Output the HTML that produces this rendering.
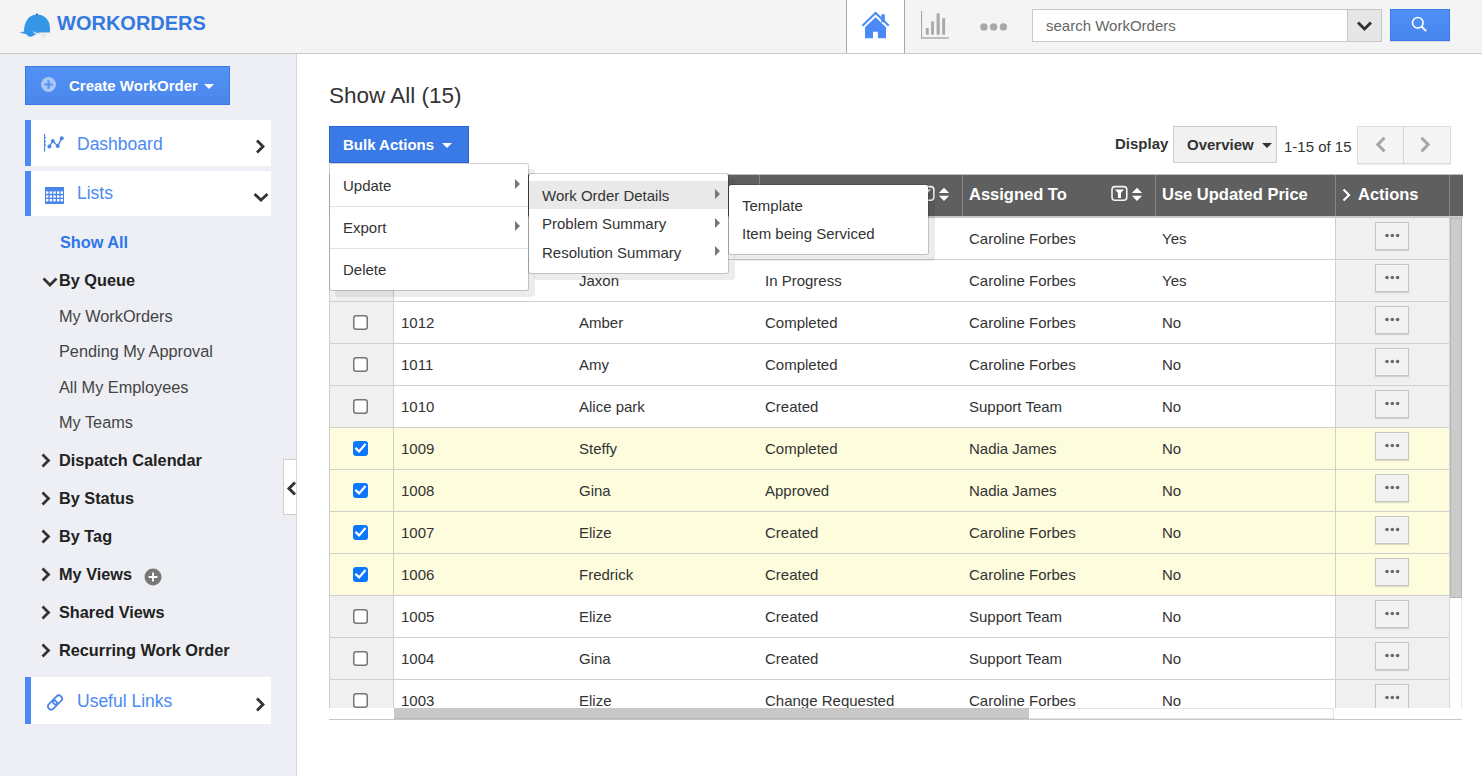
<!DOCTYPE html>
<html><head><meta charset="utf-8">
<style>
*{box-sizing:border-box;margin:0;padding:0}
html,body{width:1482px;height:776px;overflow:hidden;background:#fff;font-family:"Liberation Sans",sans-serif;color:#333}
.abs{position:absolute;line-height:1;white-space:nowrap}
svg{display:block}
#hdr{position:absolute;left:0;top:0;width:1482px;height:54px;background:#f4f4f4;border-bottom:1px solid #c9c9c9}
#side{position:absolute;left:0;top:54px;width:297px;height:722px;background:#edeff4;border-right:1px solid #dcdcdc}
.navbox{position:absolute;left:25px;width:246px;background:#fff;border-left:6px solid #4a8af4}
.navt{position:absolute;left:46px;font-size:17.5px;color:#4a8af2;line-height:1}
.si{position:absolute;left:59px;font-size:16.3px;color:#444;line-height:1;white-space:nowrap}
.sb{position:absolute;left:59px;font-size:16.3px;color:#222;font-weight:bold;line-height:1;white-space:nowrap}
.chev{position:absolute;left:40px}
/* table */
#tbl{position:absolute;left:329px;top:174px;width:1134px;height:546px;overflow:hidden}
#th{position:absolute;left:0;top:0;width:1134px;height:44px;background:#5f5f5f;border-top:1px solid #bdbdbd;border-bottom:2px solid #c9c9c9}
.hc{position:absolute;top:0;height:41px;border-left:1px solid #858585}
.ht{position:absolute;top:11px;font-size:16.5px;font-weight:bold;color:#fff;line-height:1;white-space:nowrap}
#tb{position:absolute;left:0;top:44px;width:1134px;height:490px;overflow:hidden;border-left:1px solid #cfcfcf}
.row{position:absolute;left:0;width:1120px;height:42px;border-bottom:1px solid #cfcfcf}
.ccb{position:absolute;left:0;top:0;width:64px;height:41px;border-right:1px solid #cfcfcf}
.cb{position:absolute;left:23px;top:13px}
.c{position:absolute;top:13px;font-size:15px;color:#333;line-height:1;white-space:nowrap}
.act{position:absolute;left:1005px;top:0;width:115px;height:41px;border-left:1px solid #cfcfcf}
.ab{position:absolute;left:39px;top:4px;width:34px;height:28px;background:#f2f2f2;border:1px solid #c6c6c6;box-shadow:0 1px 1px rgba(0,0,0,.12)}
.ab svg{position:absolute;left:8px;top:10px}
#vs{position:absolute;left:1120px;top:44px;width:13px;height:490px;background:#fff;border-left:1px solid #d8d8d8;border-right:1px solid #e8e8e8}
#vthumb{position:absolute;left:0;top:0;width:12px;height:380px;background:#cbcbcb;border:1px solid #b4b4b4}
#hs{position:absolute;left:65px;top:534px;width:940px;height:11px;background:#fff;border:1px solid #e4e4e4;border-left:none}
#hthumb{position:absolute;left:0;top:-1px;width:635px;height:11px;background:#c8c8c8;border-bottom:1px solid #b8b8b8}
/* menus */
.menu{position:absolute;background:#fff;background-clip:padding-box;border:1px solid rgba(0,0,0,.18);border-radius:3px;box-shadow:6px 6px 0 rgba(0,0,0,.075)}
.mi{position:absolute;font-size:15px;color:#333;line-height:1;white-space:nowrap}
.sep{position:absolute;left:0;right:0;height:1px;background:#e2e2e2}
.tri{position:absolute;width:0;height:0;border-top:5.5px solid transparent;border-bottom:5.5px solid transparent;border-left:5.6px solid #777}
</style></head><body>
<!-- HEADER -->
<div id="hdr">
  <svg class="abs" style="left:19px;top:13px" width="33" height="26" viewBox="0 0 33 26">
    <path d="M5 18.5 C5 8 10.5 1.5 18 1.5 C25.5 1.5 31 7 31 15 L31 19.5 L21.5 19.5 C18.5 19.5 16.5 21.5 14.5 22.8 C12.5 24 10 24 8.5 22.8 L7.5 21.2 L0.8 19.8 C2 19.2 3.5 18.7 5 18.5 Z" fill="#3596e8"/>
    <circle cx="18" cy="1.4" r="1.1" fill="#2a78c0"/>
    <path d="M14.5 18.6 L16.5 20.2 L22.5 21.6" stroke="#dfe6ec" stroke-width="1.2" fill="none"/>
    <circle cx="24.6" cy="22.3" r="1.5" fill="none" stroke="#d5dbe0" stroke-width="0.9"/>
  </svg>
  <div class="abs" style="left:57px;top:13px;font-size:20px;font-weight:bold;color:#3479e0;">WORKORDERS</div>
  <!-- home tab -->
  <div class="abs" style="left:846px;top:0;width:59px;height:53px;background:#fff;border-left:1px solid #a8a8a8;border-right:1px solid #a8a8a8"></div>
  <svg class="abs" style="left:855px;top:5px" width="40" height="40" viewBox="0 0 40 40">
    <path d="M7.5 20.8 L20.6 8 L33.8 20.8" stroke="#4a8af4" stroke-width="2" fill="none"/>
    <rect x="26.3" y="9.3" width="3.5" height="8" fill="#4a8af4"/>
    <path d="M10 22.3 L20.6 12.2 L31 22.3 L31 33.2 L22.9 33.2 L22.9 26.8 L18 26.8 L18 33.2 L10 33.2 Z" fill="#4a8af4"/>
  </svg>
  <svg class="abs" style="left:912px;top:5px" width="100" height="40" viewBox="0 0 100 40">
    <g fill="#a8a8a8">
    <rect x="9" y="5.9" width="1.1" height="27.8"/><rect x="9" y="32.3" width="28" height="1.4"/>
    <rect x="13.8" y="22.9" width="2.9" height="6.8"/><rect x="19.1" y="16.5" width="2.8" height="13.2"/><rect x="24.6" y="8.4" width="3.1" height="21.3"/><rect x="30.2" y="13.2" width="2.9" height="16.5"/>
    <circle cx="71.9" cy="21.9" r="3.7"/><circle cx="81.6" cy="21.9" r="3.7"/><circle cx="91.4" cy="21.9" r="3.7"/>
    </g>
  </svg>
  
  <!-- search -->
  <div class="abs" style="left:1032px;top:9px;width:350px;height:33px;background:#fff;border:1px solid #c8c8c8"></div>
  <div class="abs" style="left:1046px;top:18px;font-size:15px;color:#666">search WorkOrders</div>
  <div class="abs" style="left:1347px;top:9px;width:35px;height:33px;background:#e6e6e6;border:1px solid #c6c6c6"></div>
  <svg class="abs" style="left:1356px;top:20px" width="17" height="12" viewBox="0 0 17 12">
    <path d="M2 2.5 L8.5 9 L15 2.5" stroke="#333" stroke-width="3" fill="none"/>
  </svg>
  <div class="abs" style="left:1390px;top:9px;width:60px;height:32px;background:linear-gradient(#4f8ff6,#4886ee);border:1px solid #3a7cf0;box-shadow:0 1px 1px rgba(0,0,0,.1)"></div>
  <svg class="abs" style="left:1411px;top:16px" width="17" height="17" viewBox="0 0 17 17">
    <circle cx="6.8" cy="6.8" r="5.3" stroke="#fff" stroke-width="1.6" fill="none"/>
    <path d="M10.6 10.6 L15.2 15.2" stroke="#fff" stroke-width="1.9"/>
  </svg>
</div>

<!-- SIDEBAR -->
<div id="side">
  <div class="abs" style="left:25px;top:12px;width:205px;height:39px;background:linear-gradient(#5391f6,#4a86ea);border:1px solid #3a78e6"></div>
  <svg class="abs" style="left:40px;top:22px" width="17" height="17" viewBox="0 0 17 17">
    <circle cx="8.5" cy="8.5" r="7.5" fill="#a9c6f7"/>
    <path d="M8.5 4.2 L8.5 12.8 M4.2 8.5 L12.8 8.5" stroke="#5a93f2" stroke-width="2.2"/>
  </svg>
  <div class="abs" style="left:69px;top:24px;font-size:15px;font-weight:bold;color:#fff">Create WorkOrder</div>
  <div class="abs" style="left:204px;top:30px;width:0;height:0;border-left:5px solid transparent;border-right:5px solid transparent;border-top:5px solid #fff"></div>

  <div class="navbox" style="top:66px;height:46px">
    <svg class="abs" style="left:12px;top:13px" width="22" height="20" viewBox="0 0 22 20">
      <rect x="1" y="0.8" width="1.1" height="18" fill="#4a86e8"/>
      <circle cx="2.4" cy="4.6" r="0.7" fill="#4a86e8"/><circle cx="2.4" cy="8.4" r="0.7" fill="#4a86e8"/><circle cx="2.4" cy="12" r="0.7" fill="#4a86e8"/>
      <path d="M6.4 13.4 L9.8 8 L14.7 12.9 L18.7 5.3" stroke="#4a86e8" stroke-width="1.4" fill="none"/>
      <circle cx="6.4" cy="13.4" r="2" fill="#4a86e8"/><circle cx="9.8" cy="8" r="2" fill="#4a86e8"/><circle cx="14.7" cy="12.9" r="2" fill="#4a86e8"/><circle cx="18.7" cy="5.3" r="2" fill="#4a86e8"/>
    </svg>
    <div class="navt" style="top:16px">Dashboard</div>
    <svg class="abs" style="left:223px;top:19px" width="12" height="15" viewBox="0 0 12 15">
      <path d="M3 1.5 L9 7.5 L3 13.5" stroke="#333" stroke-width="2.8" fill="none"/>
    </svg>
  </div>
  <div class="navbox" style="top:117px;height:45px">
    <svg class="abs" style="left:14px;top:16px" width="19" height="17" viewBox="0 0 19 17">
      <rect x="0" y="0" width="19" height="17" fill="#4a86e8"/>
      <g fill="#fff"><rect x="1" y="4.4" width="2.4" height="2.4"/><rect x="4.7" y="4.4" width="2.4" height="2.4"/><rect x="8.3" y="4.4" width="2.4" height="2.4"/><rect x="12" y="4.4" width="2.4" height="2.4"/><rect x="15.6" y="4.4" width="2.4" height="2.4"/><rect x="1" y="8.3" width="2.4" height="2.4"/><rect x="4.7" y="8.3" width="2.4" height="2.4"/><rect x="8.3" y="8.3" width="2.4" height="2.4"/><rect x="12" y="8.3" width="2.4" height="2.4"/><rect x="15.6" y="8.3" width="2.4" height="2.4"/><rect x="1" y="12" width="2.4" height="2.4"/><rect x="4.7" y="12" width="2.4" height="2.4"/><rect x="8.3" y="12" width="2.4" height="2.4"/><rect x="12" y="12" width="2.4" height="2.4"/><rect x="15.6" y="12" width="2.4" height="2.4"/></g>
    </svg>
    <div class="navt" style="top:14px">Lists</div>
    <svg class="abs" style="left:222px;top:19.5px" width="16" height="12" viewBox="0 0 16 12">
      <path d="M1.5 3 L8 9 L14.5 3" stroke="#333" stroke-width="2.8" fill="none"/>
    </svg>
  </div>

  <div class="sb" style="left:60px;top:180px;color:#2f76ec">Show All</div>
  <svg class="abs" style="left:42px;top:221.5px" width="16" height="12" viewBox="0 0 16 12">
    <path d="M1.5 2.5 L8 9 L14.5 2.5" stroke="#333" stroke-width="2.8" fill="none"/>
  </svg>
  <div class="sb" style="top:218px">By Queue</div>
  <div class="si" style="top:254px">My WorkOrders</div>
  <div class="si" style="top:289px">Pending My Approval</div>
  <div class="si" style="top:325px">All My Employees</div>
  <div class="si" style="top:360px">My Teams</div>

  <svg class="chev" style="top:399px" width="12" height="15" viewBox="0 0 12 15"><path d="M2.5 1.5 L8.5 7.5 L2.5 13.5" stroke="#333" stroke-width="2.8" fill="none"/></svg>
  <div class="sb" style="top:398px">Dispatch Calendar</div>
  <svg class="chev" style="top:437px" width="12" height="15" viewBox="0 0 12 15"><path d="M2.5 1.5 L8.5 7.5 L2.5 13.5" stroke="#333" stroke-width="2.8" fill="none"/></svg>
  <div class="sb" style="top:436px">By Status</div>
  <svg class="chev" style="top:475px" width="12" height="15" viewBox="0 0 12 15"><path d="M2.5 1.5 L8.5 7.5 L2.5 13.5" stroke="#333" stroke-width="2.8" fill="none"/></svg>
  <div class="sb" style="top:474px">By Tag</div>
  <svg class="chev" style="top:513px" width="12" height="15" viewBox="0 0 12 15"><path d="M2.5 1.5 L8.5 7.5 L2.5 13.5" stroke="#333" stroke-width="2.8" fill="none"/></svg>
  <div class="sb" style="top:512px">My Views</div>
  <svg class="abs" style="left:144px;top:514px" width="18" height="18" viewBox="0 0 18 18">
    <circle cx="9" cy="9" r="8.5" fill="#777"/>
    <path d="M9 4.6 L9 13.4 M4.6 9 L13.4 9" stroke="#fff" stroke-width="1.8"/>
  </svg>
  <svg class="chev" style="top:551px" width="12" height="15" viewBox="0 0 12 15"><path d="M2.5 1.5 L8.5 7.5 L2.5 13.5" stroke="#333" stroke-width="2.8" fill="none"/></svg>
  <div class="sb" style="top:550px">Shared Views</div>
  <svg class="chev" style="top:589px" width="12" height="15" viewBox="0 0 12 15"><path d="M2.5 1.5 L8.5 7.5 L2.5 13.5" stroke="#333" stroke-width="2.8" fill="none"/></svg>
  <div class="sb" style="top:588px">Recurring Work Order</div>

  <div class="navbox" style="top:623px;height:47px">
    <svg class="abs" style="left:15px;top:17px" width="18" height="17" viewBox="0 0 18 17">
      <g transform="translate(9 8.5) rotate(-45)" fill="none" stroke="#4a86e8" stroke-width="1.8">
        <rect x="-8.6" y="-3.2" width="10.2" height="6.4" rx="3.2"/>
        <rect x="-1.6" y="-3.2" width="10.2" height="6.4" rx="3.2"/>
      </g>
    </svg>
    <div class="navt" style="top:16px">Useful Links</div>
    <svg class="abs" style="left:223px;top:20px" width="12" height="15" viewBox="0 0 12 15">
      <path d="M3 1.5 L9 7.5 L3 13.5" stroke="#333" stroke-width="2.8" fill="none"/>
    </svg>
  </div>
</div>
<!-- collapse tab -->
<div class="abs" style="left:283px;top:459px;width:13px;height:56px;background:#fff;border:1px solid #cfcfcf;border-right:none"></div>
<svg class="abs" style="left:285px;top:479px" width="13" height="20" viewBox="0 0 13 20"><path d="M10 3.5 L4 9.5 L10 15.5" stroke="#333" stroke-width="3" fill="none"/></svg>
<div class="abs" style="left:296px;top:54px;width:1px;height:722px;background:#d6d6d6"></div>
<!-- CONTENT -->
<div class="abs" style="left:329px;top:84.5px;font-size:22.5px;color:#333">Show All (15)</div>

<div class="abs" style="left:1115px;top:136px;font-size:15px;font-weight:bold;color:#333">Display</div>
<div class="abs" style="left:1173px;top:126px;width:104px;height:37px;background:#f1f1f1;border:1px solid #cdcdcd"></div>
<div class="abs" style="left:1187px;top:137px;font-size:15px;font-weight:bold;color:#333">Overview</div>
<div class="abs" style="left:1262px;top:143px;width:0;height:0;border-left:5px solid transparent;border-right:5px solid transparent;border-top:5px solid #333"></div>
<div class="abs" style="left:1284px;top:139px;font-size:15px;color:#333">1-15 of 15</div>
<div class="abs" style="left:1357px;top:126px;width:94px;height:38px;background:#f5f5f5;border:1px solid #dcdcdc;box-shadow:0 1px 1px rgba(0,0,0,.06)"></div>
<div class="abs" style="left:1403px;top:126px;width:1px;height:38px;background:#d6d6d6"></div>
<svg class="abs" style="left:1374px;top:136px" width="13" height="18" viewBox="0 0 13 18"><path d="M10.5 1.8 L3.8 8.6 L10.5 15.4" stroke="#a6a6a6" stroke-width="3" fill="none"/></svg>
<svg class="abs" style="left:1419px;top:136px" width="13" height="18" viewBox="0 0 13 18"><path d="M2.5 1.8 L9.2 8.6 L2.5 15.4" stroke="#a6a6a6" stroke-width="3" fill="none"/></svg>

<!-- TABLE -->
<div id="tbl">
  <div id="th">
    <div class="abs" style="left:0;top:-1px;width:1px;height:44px;background:#c4c4c4"></div>
    <div class="hc" style="left:64px;border-left:1px solid #858585"></div>
    <div class="hc" style="left:243px"></div>
    <div class="hc" style="left:430px"></div>
    <div class="hc" style="left:633px"></div>
    <div class="hc" style="left:826px"></div>
    <div class="hc" style="left:1006px"></div>
    <div class="hc" style="left:1120px"></div>
    <div class="ht" style="left:71px">ID</div>
    <div class="ht" style="left:249px">Name</div>
    <div class="ht" style="left:436px">Status</div>
    <svg class="abs" style="left:588px;top:9px" width="34" height="20" viewBox="0 0 34 20"><rect x="2" y="2.6" width="14.8" height="13.7" rx="3" stroke="#f4f4f4" stroke-width="1.6" fill="none"/><path d="M4.7 5.5 L13.9 5.5 L11 8.8 L11 14 L7.9 14 L7.9 8.8 Z" fill="#fff"/><path d="M21.9 9.1 L27 3.7 L32.1 9.1 Z M21.9 11.7 L32.1 11.7 L27 17.1 Z" fill="#fff"/></svg>
    <div class="ht" style="left:640px">Assigned To</div>
    <svg class="abs" style="left:781px;top:9px" width="34" height="20" viewBox="0 0 34 20"><rect x="2" y="2.6" width="14.8" height="13.7" rx="3" stroke="#f4f4f4" stroke-width="1.6" fill="none"/><path d="M4.7 5.5 L13.9 5.5 L11 8.8 L11 14 L7.9 14 L7.9 8.8 Z" fill="#fff"/><path d="M21.9 9.1 L27 3.7 L32.1 9.1 Z M21.9 11.7 L32.1 11.7 L27 17.1 Z" fill="#fff"/></svg>
    <div class="ht" style="left:833px">Use Updated Price</div>
    <svg class="abs" style="left:1013px;top:13px" width="9" height="14" viewBox="0 0 9 14"><path d="M1.5 1.5 L7 7 L1.5 12.5" stroke="#fff" stroke-width="2.2" fill="none"/></svg>
    <div class="ht" style="left:1029px">Actions</div>
  </div>
  <div id="tb">
<div class="row" style="top:0px;background:#fff">
<div class="ccb" style="background:#f0f0f0"><span class="cb"><svg width="15" height="15" viewBox="0 0 15 15"><rect x="0.75" y="0.75" width="13.5" height="13.5" rx="2.5" fill="#fff" stroke="#767676" stroke-width="1.5"/></svg></span></div>
<span class="c" style="left:71px">1014</span><span class="c" style="left:249px"></span><span class="c" style="left:435px"></span><span class="c" style="left:639px">Caroline Forbes</span><span class="c" style="left:832px">Yes</span>
<div class="act" style="background:#f0f0f0"><div class="ab"><svg width="16" height="5" viewBox="0 0 16 5"><circle cx="3" cy="2.5" r="1.8" fill="#6a6a6a"/><circle cx="8.3" cy="2.5" r="1.8" fill="#6a6a6a"/><circle cx="13.6" cy="2.5" r="1.8" fill="#6a6a6a"/></svg></div></div>
</div>
<div class="row" style="top:42px;background:#fff">
<div class="ccb" style="background:#f0f0f0"><span class="cb"><svg width="15" height="15" viewBox="0 0 15 15"><rect x="0.75" y="0.75" width="13.5" height="13.5" rx="2.5" fill="#fff" stroke="#767676" stroke-width="1.5"/></svg></span></div>
<span class="c" style="left:71px">1013</span><span class="c" style="left:249px">Jaxon</span><span class="c" style="left:435px">In Progress</span><span class="c" style="left:639px">Caroline Forbes</span><span class="c" style="left:832px">Yes</span>
<div class="act" style="background:#f0f0f0"><div class="ab"><svg width="16" height="5" viewBox="0 0 16 5"><circle cx="3" cy="2.5" r="1.8" fill="#6a6a6a"/><circle cx="8.3" cy="2.5" r="1.8" fill="#6a6a6a"/><circle cx="13.6" cy="2.5" r="1.8" fill="#6a6a6a"/></svg></div></div>
</div>
<div class="row" style="top:84px;background:#fff">
<div class="ccb" style="background:#f0f0f0"><span class="cb"><svg width="15" height="15" viewBox="0 0 15 15"><rect x="0.75" y="0.75" width="13.5" height="13.5" rx="2.5" fill="#fff" stroke="#767676" stroke-width="1.5"/></svg></span></div>
<span class="c" style="left:71px">1012</span><span class="c" style="left:249px">Amber</span><span class="c" style="left:435px">Completed</span><span class="c" style="left:639px">Caroline Forbes</span><span class="c" style="left:832px">No</span>
<div class="act" style="background:#f0f0f0"><div class="ab"><svg width="16" height="5" viewBox="0 0 16 5"><circle cx="3" cy="2.5" r="1.8" fill="#6a6a6a"/><circle cx="8.3" cy="2.5" r="1.8" fill="#6a6a6a"/><circle cx="13.6" cy="2.5" r="1.8" fill="#6a6a6a"/></svg></div></div>
</div>
<div class="row" style="top:126px;background:#fff">
<div class="ccb" style="background:#f0f0f0"><span class="cb"><svg width="15" height="15" viewBox="0 0 15 15"><rect x="0.75" y="0.75" width="13.5" height="13.5" rx="2.5" fill="#fff" stroke="#767676" stroke-width="1.5"/></svg></span></div>
<span class="c" style="left:71px">1011</span><span class="c" style="left:249px">Amy</span><span class="c" style="left:435px">Completed</span><span class="c" style="left:639px">Caroline Forbes</span><span class="c" style="left:832px">No</span>
<div class="act" style="background:#f0f0f0"><div class="ab"><svg width="16" height="5" viewBox="0 0 16 5"><circle cx="3" cy="2.5" r="1.8" fill="#6a6a6a"/><circle cx="8.3" cy="2.5" r="1.8" fill="#6a6a6a"/><circle cx="13.6" cy="2.5" r="1.8" fill="#6a6a6a"/></svg></div></div>
</div>
<div class="row" style="top:168px;background:#fff">
<div class="ccb" style="background:#f0f0f0"><span class="cb"><svg width="15" height="15" viewBox="0 0 15 15"><rect x="0.75" y="0.75" width="13.5" height="13.5" rx="2.5" fill="#fff" stroke="#767676" stroke-width="1.5"/></svg></span></div>
<span class="c" style="left:71px">1010</span><span class="c" style="left:249px">Alice park</span><span class="c" style="left:435px">Created</span><span class="c" style="left:639px">Support Team</span><span class="c" style="left:832px">No</span>
<div class="act" style="background:#f0f0f0"><div class="ab"><svg width="16" height="5" viewBox="0 0 16 5"><circle cx="3" cy="2.5" r="1.8" fill="#6a6a6a"/><circle cx="8.3" cy="2.5" r="1.8" fill="#6a6a6a"/><circle cx="13.6" cy="2.5" r="1.8" fill="#6a6a6a"/></svg></div></div>
</div>
<div class="row" style="top:210px;background:#fdfcdd">
<div class="ccb" style="background:#fdfcdd"><span class="cb"><svg width="15" height="15" viewBox="0 0 15 15"><rect x="0" y="0" width="15" height="15" rx="3" fill="#0b76fe"/><path d="M3.2 7.6 L6.1 10.4 L11.8 3.9" stroke="#fff" stroke-width="2.2" fill="none" stroke-linecap="square"/></svg></span></div>
<span class="c" style="left:71px">1009</span><span class="c" style="left:249px">Steffy</span><span class="c" style="left:435px">Completed</span><span class="c" style="left:639px">Nadia James</span><span class="c" style="left:832px">No</span>
<div class="act" style="background:#fdfcdd"><div class="ab"><svg width="16" height="5" viewBox="0 0 16 5"><circle cx="3" cy="2.5" r="1.8" fill="#6a6a6a"/><circle cx="8.3" cy="2.5" r="1.8" fill="#6a6a6a"/><circle cx="13.6" cy="2.5" r="1.8" fill="#6a6a6a"/></svg></div></div>
</div>
<div class="row" style="top:252px;background:#fdfcdd">
<div class="ccb" style="background:#fdfcdd"><span class="cb"><svg width="15" height="15" viewBox="0 0 15 15"><rect x="0" y="0" width="15" height="15" rx="3" fill="#0b76fe"/><path d="M3.2 7.6 L6.1 10.4 L11.8 3.9" stroke="#fff" stroke-width="2.2" fill="none" stroke-linecap="square"/></svg></span></div>
<span class="c" style="left:71px">1008</span><span class="c" style="left:249px">Gina</span><span class="c" style="left:435px">Approved</span><span class="c" style="left:639px">Nadia James</span><span class="c" style="left:832px">No</span>
<div class="act" style="background:#fdfcdd"><div class="ab"><svg width="16" height="5" viewBox="0 0 16 5"><circle cx="3" cy="2.5" r="1.8" fill="#6a6a6a"/><circle cx="8.3" cy="2.5" r="1.8" fill="#6a6a6a"/><circle cx="13.6" cy="2.5" r="1.8" fill="#6a6a6a"/></svg></div></div>
</div>
<div class="row" style="top:294px;background:#fdfcdd">
<div class="ccb" style="background:#fdfcdd"><span class="cb"><svg width="15" height="15" viewBox="0 0 15 15"><rect x="0" y="0" width="15" height="15" rx="3" fill="#0b76fe"/><path d="M3.2 7.6 L6.1 10.4 L11.8 3.9" stroke="#fff" stroke-width="2.2" fill="none" stroke-linecap="square"/></svg></span></div>
<span class="c" style="left:71px">1007</span><span class="c" style="left:249px">Elize</span><span class="c" style="left:435px">Created</span><span class="c" style="left:639px">Caroline Forbes</span><span class="c" style="left:832px">No</span>
<div class="act" style="background:#fdfcdd"><div class="ab"><svg width="16" height="5" viewBox="0 0 16 5"><circle cx="3" cy="2.5" r="1.8" fill="#6a6a6a"/><circle cx="8.3" cy="2.5" r="1.8" fill="#6a6a6a"/><circle cx="13.6" cy="2.5" r="1.8" fill="#6a6a6a"/></svg></div></div>
</div>
<div class="row" style="top:336px;background:#fdfcdd">
<div class="ccb" style="background:#fdfcdd"><span class="cb"><svg width="15" height="15" viewBox="0 0 15 15"><rect x="0" y="0" width="15" height="15" rx="3" fill="#0b76fe"/><path d="M3.2 7.6 L6.1 10.4 L11.8 3.9" stroke="#fff" stroke-width="2.2" fill="none" stroke-linecap="square"/></svg></span></div>
<span class="c" style="left:71px">1006</span><span class="c" style="left:249px">Fredrick</span><span class="c" style="left:435px">Created</span><span class="c" style="left:639px">Caroline Forbes</span><span class="c" style="left:832px">No</span>
<div class="act" style="background:#fdfcdd"><div class="ab"><svg width="16" height="5" viewBox="0 0 16 5"><circle cx="3" cy="2.5" r="1.8" fill="#6a6a6a"/><circle cx="8.3" cy="2.5" r="1.8" fill="#6a6a6a"/><circle cx="13.6" cy="2.5" r="1.8" fill="#6a6a6a"/></svg></div></div>
</div>
<div class="row" style="top:378px;background:#fff">
<div class="ccb" style="background:#f0f0f0"><span class="cb"><svg width="15" height="15" viewBox="0 0 15 15"><rect x="0.75" y="0.75" width="13.5" height="13.5" rx="2.5" fill="#fff" stroke="#767676" stroke-width="1.5"/></svg></span></div>
<span class="c" style="left:71px">1005</span><span class="c" style="left:249px">Elize</span><span class="c" style="left:435px">Created</span><span class="c" style="left:639px">Support Team</span><span class="c" style="left:832px">No</span>
<div class="act" style="background:#f0f0f0"><div class="ab"><svg width="16" height="5" viewBox="0 0 16 5"><circle cx="3" cy="2.5" r="1.8" fill="#6a6a6a"/><circle cx="8.3" cy="2.5" r="1.8" fill="#6a6a6a"/><circle cx="13.6" cy="2.5" r="1.8" fill="#6a6a6a"/></svg></div></div>
</div>
<div class="row" style="top:420px;background:#fff">
<div class="ccb" style="background:#f0f0f0"><span class="cb"><svg width="15" height="15" viewBox="0 0 15 15"><rect x="0.75" y="0.75" width="13.5" height="13.5" rx="2.5" fill="#fff" stroke="#767676" stroke-width="1.5"/></svg></span></div>
<span class="c" style="left:71px">1004</span><span class="c" style="left:249px">Gina</span><span class="c" style="left:435px">Created</span><span class="c" style="left:639px">Support Team</span><span class="c" style="left:832px">No</span>
<div class="act" style="background:#f0f0f0"><div class="ab"><svg width="16" height="5" viewBox="0 0 16 5"><circle cx="3" cy="2.5" r="1.8" fill="#6a6a6a"/><circle cx="8.3" cy="2.5" r="1.8" fill="#6a6a6a"/><circle cx="13.6" cy="2.5" r="1.8" fill="#6a6a6a"/></svg></div></div>
</div>
<div class="row" style="top:462px;background:#fff">
<div class="ccb" style="background:#f0f0f0"><span class="cb"><svg width="15" height="15" viewBox="0 0 15 15"><rect x="0.75" y="0.75" width="13.5" height="13.5" rx="2.5" fill="#fff" stroke="#767676" stroke-width="1.5"/></svg></span></div>
<span class="c" style="left:71px">1003</span><span class="c" style="left:249px">Elize</span><span class="c" style="left:435px">Change Requested</span><span class="c" style="left:639px">Caroline Forbes</span><span class="c" style="left:832px">No</span>
<div class="act" style="background:#f0f0f0"><div class="ab"><svg width="16" height="5" viewBox="0 0 16 5"><circle cx="3" cy="2.5" r="1.8" fill="#6a6a6a"/><circle cx="8.3" cy="2.5" r="1.8" fill="#6a6a6a"/><circle cx="13.6" cy="2.5" r="1.8" fill="#6a6a6a"/></svg></div></div>
</div>
  </div>
  <div id="vs"><div id="vthumb"></div></div>
  <div id="hs"><div id="hthumb"></div></div>
  <div class="abs" style="left:0;top:545px;width:1133px;height:1px;background:#c8c8c8"></div>
</div>

<!-- BULK ACTIONS -->
<div class="abs" style="left:329px;top:126px;width:140px;height:37px;background:#3a7ae6;border:1px solid #2c64d2"></div>
<div class="abs" style="left:343px;top:137px;font-size:15px;font-weight:bold;color:#fff">Bulk Actions</div>
<div class="abs" style="left:442px;top:143px;width:0;height:0;border-left:5px solid transparent;border-right:5px solid transparent;border-top:5px solid #fff"></div>

<div class="menu" style="left:329px;top:163px;width:200px;height:128px">
  <div class="mi" style="left:13px;top:14px">Update</div>
  <div class="tri" style="left:185px;top:15px"></div>
  <div class="sep" style="top:42px"></div>
  <div class="mi" style="left:13px;top:56px">Export</div>
  <div class="tri" style="left:185px;top:57px"></div>
  <div class="sep" style="top:84px"></div>
  <div class="mi" style="left:13px;top:98px">Delete</div>
</div>
<div class="menu" style="left:528px;top:173px;width:201px;height:101px">
  <div class="abs" style="left:0;top:7px;width:199px;height:28px;background:#e9e9e9"></div>
  <div class="mi" style="left:13px;top:14px">Work Order Details</div>
  <div class="tri" style="left:186px;top:15px"></div>
  <div class="mi" style="left:13px;top:42px">Problem Summary</div>
  <div class="tri" style="left:186px;top:43.5px"></div>
  <div class="mi" style="left:13px;top:71px">Resolution Summary</div>
  <div class="tri" style="left:186px;top:72px"></div>
</div>
<div class="menu" style="left:728px;top:184px;width:201px;height:71px">
  <div class="mi" style="left:13px;top:13px">Template</div>
  <div class="mi" style="left:13px;top:41px">Item being Serviced</div>
</div>
</body></html>
